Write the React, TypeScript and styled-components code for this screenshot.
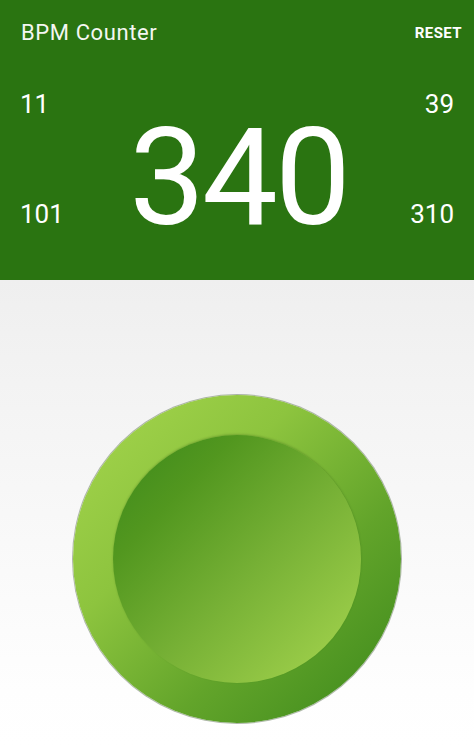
import React from "react";
import styled, { createGlobalStyle } from "styled-components";

const GlobalStyle = createGlobalStyle`
  html, body {
    margin: 0;
    padding: 0;
    background: #ffffff;
  }
  body {
    font-family: Roboto, "Noto Sans", "Liberation Sans", sans-serif;
  }
  * { box-sizing: border-box; }
`;

const Screen = styled.div`
  width: 474px;
  height: 746px;
  display: flex;
  flex-direction: column;
  overflow: hidden;
`;

const Header = styled.header`
  height: 280px;
  flex: none;
  background: #2a7411;
  color: #ffffff;
  display: flex;
  flex-direction: column;
`;

const TitleBar = styled.div`
  display: flex;
  justify-content: space-between;
  align-items: flex-start;
  padding: 21px 12px 0 21px;
`;

const Title = styled.h1`
  margin: 0;
  font-size: 22px;
  line-height: 24px;
  font-weight: 400;
  letter-spacing: 0.6px;
  color: #f4f7f2;
`;

const ResetButton = styled.button`
  border: none;
  background: none;
  padding: 0;
  margin: 0;
  font-family: inherit;
  font-size: 15px;
  line-height: 24px;
  font-weight: 700;
  color: #ffffff;
  letter-spacing: 0.4px;
`;

const Stats = styled.div`
  margin-top: 44px;
  display: grid;
  grid-template-columns: 1fr auto 1fr;
  padding: 0 20px;
`;

const SideColumn = styled.div<{ $align: "start" | "end" }>`
  display: flex;
  flex-direction: column;
  align-items: ${(p) => (p.$align === "start" ? "flex-start" : "flex-end")};
  gap: 80px;
`;

const SideValue = styled.span`
  font-size: 26px;
  line-height: 30px;
  font-weight: 400;
`;

const BigValue = styled.div`
  margin-top: 22px;
  font-size: 135px;
  line-height: 135px;
  font-weight: 400;
  letter-spacing: -3px;
  padding-left: 3px;
`;

const Body = styled.main`
  flex: 1;
  display: flex;
  justify-content: center;
  align-items: flex-start;
  padding-top: 115px;
  background: linear-gradient(to bottom, #efefef 0%, #f8f8f8 50%, #fefefe 88%, #ffffff 100%);
`;

const TapOuter = styled.button`
  width: 328px;
  height: 328px;
  border-radius: 50%;
  border: none;
  padding: 0;
  display: flex;
  align-items: center;
  justify-content: center;
  background: linear-gradient(135deg, #a6d64e 0%, #8dc43e 35%, #62a42a 65%, #3b881b 100%);
  box-shadow: 0 0 0 1px rgba(110, 125, 100, 0.55);
  cursor: pointer;
`;

const TapInner = styled.span`
  width: 248px;
  height: 248px;
  border-radius: 50%;
  background: linear-gradient(135deg, #3b881b 0%, #52971f 25%, #76b035 55%, #a8d750 100%);
  box-shadow: 0 -1px 2px rgba(30, 70, 10, 0.25);
`;

export default function App() {
  return (
    <>
      <GlobalStyle />
      <Screen>
        <Header>
          <TitleBar>
            <Title>BPM Counter</Title>
            <ResetButton>RESET</ResetButton>
          </TitleBar>
          <Stats>
            <SideColumn $align="start">
              <SideValue>11</SideValue>
              <SideValue>101</SideValue>
            </SideColumn>
            <BigValue>340</BigValue>
            <SideColumn $align="end">
              <SideValue>39</SideValue>
              <SideValue>310</SideValue>
            </SideColumn>
          </Stats>
        </Header>
        <Body>
          <TapOuter aria-label="Tap">
            <TapInner />
          </TapOuter>
        </Body>
      </Screen>
    </>
  );
}
